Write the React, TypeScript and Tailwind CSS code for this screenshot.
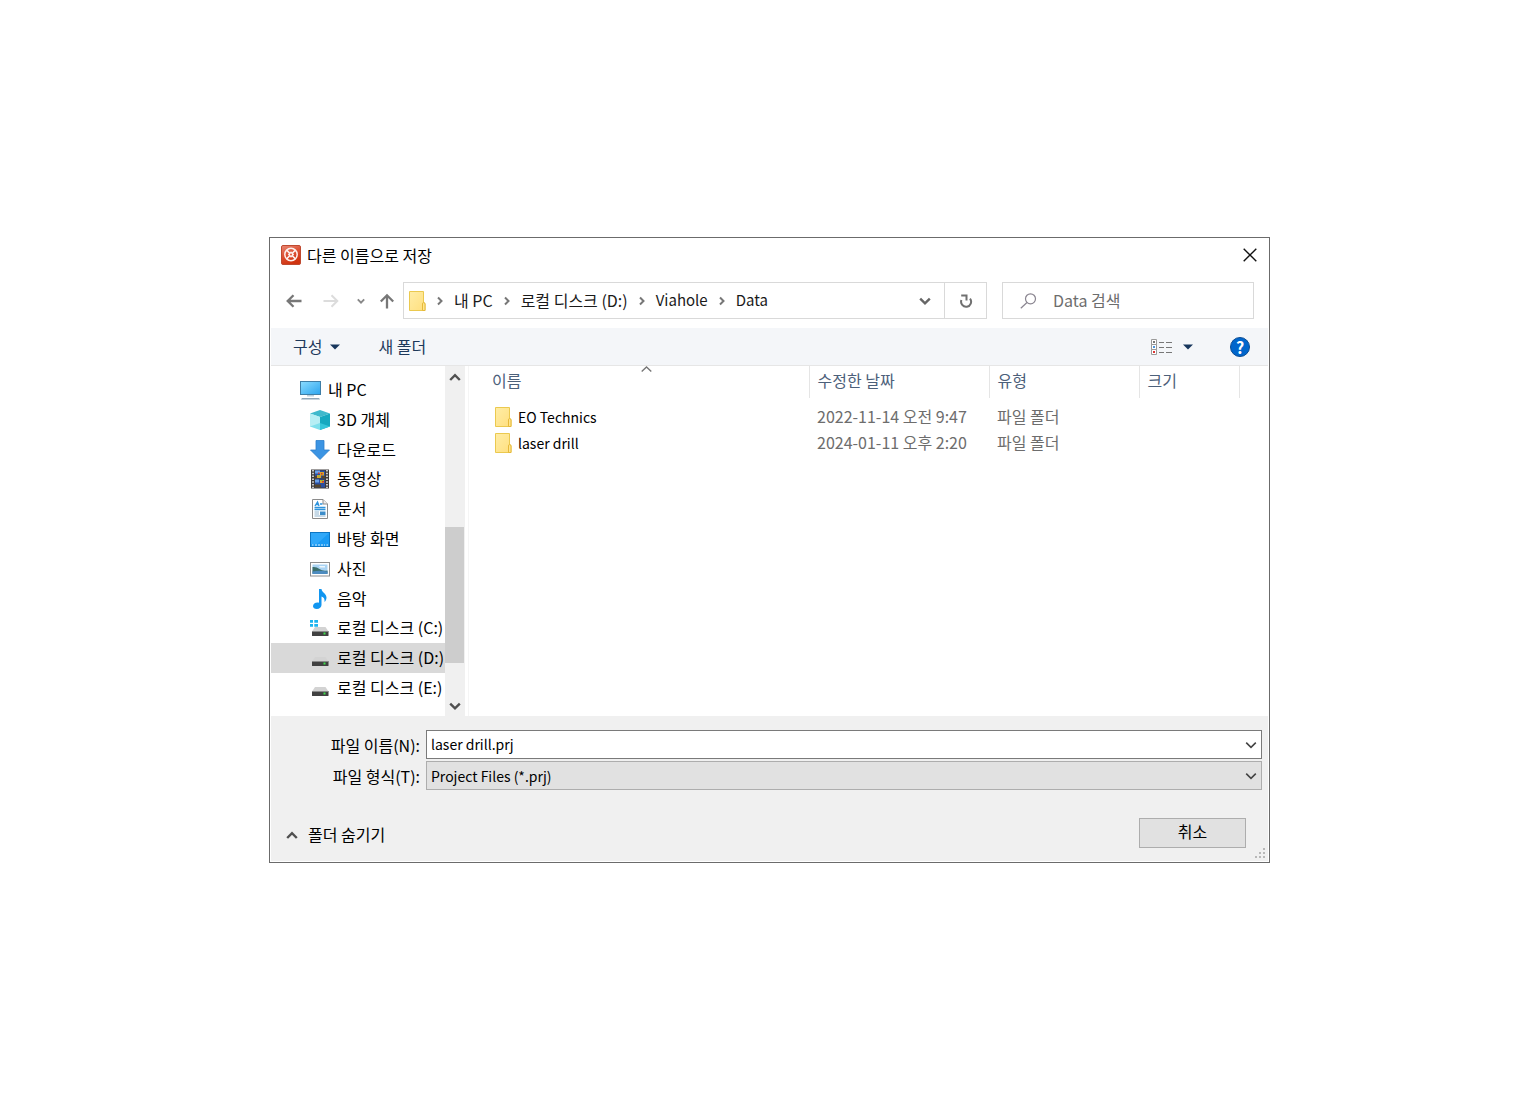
import { useState } from 'react';
import type { ReactNode } from 'react';

function AppIcon() {
  return (
    <svg width="20" height="20" viewBox="0 0 20 20" aria-hidden="true">
      <defs>
        <linearGradient id="app" x1="0" y1="0" x2="0.4" y2="1">
          <stop offset="0" stopColor="#e98a76" />
          <stop offset="0.5" stopColor="#dd5236" />
          <stop offset="1" stopColor="#d0330f" />
        </linearGradient>
      </defs>
      <rect x="0.5" y="0.5" width="19" height="19" rx="1.5" fill="url(#app)" stroke="#bf4a30" />
      <circle cx="10" cy="9.500" r="6.200" fill="none" stroke="#fdf1ee" strokeWidth="1.500" />
      <path d="m5.600 5.100 8.800 8.800M14.400 5.100l-8.800 8.800" stroke="#fdf1ee" strokeWidth="1.500" />
      <path d="m10 6.300 3.200 3.200-3.200 3.200-3.200-3.200Z" fill="#fdf1ee" />
      <circle cx="10" cy="9.500" r="1" fill="#dd5236" />
    </svg>
  );
}

function Chevron({ dir, size = 10, width = 2, color = '#666' }: { dir: 'up' | 'down' | 'right'; size?: number; width?: number; color?: string }) {
  const d = { up: 'M1 7.5 5 3.5 9 7.5', down: 'M1 3 5 7 9 3', right: 'M3 1.5 6.5 5 3 8.5' }[dir];
  return (
    <svg width={size} height={size} viewBox="0 0 10 10" fill="none" stroke={color} strokeWidth={width} className="shrink-0" aria-hidden="true">
      <path d={d} />
    </svg>
  );
}

function Arrow({ dir, color }: { dir: 'left' | 'right' | 'up'; color: string }) {
  const d = { left: 'M15.5 8H1.8M7.5 2.200 1.700 8l5.800 5.800', right: 'M.5 8h13.700M8.500 2.200 14.300 8l-5.800 5.800', up: 'M8 15.500V2.500M1.800 8.500 8 2.300l6.200 6.200' }[dir];
  return (
    <svg width="16" height="16" viewBox="0 0 16 16" fill="none" stroke={color} strokeWidth={dir === 'right' ? 2 : 2.3} aria-hidden="true">
      <path d={d} />
    </svg>
  );
}

function Triangle() {
  return (
    <svg width="10" height="6" viewBox="0 0 10 6" className="shrink-0" aria-hidden="true">
      <path d="M0 .5h10L5 5.5Z" fill="#17365d" />
    </svg>
  );
}

function FolderIcon() {
  return (
    <svg width="17" height="20" viewBox="0 0 17 20" className="shrink-0" aria-hidden="true">
      <defs>
        <linearGradient id="fold" x1="0" y1="0" x2="1" y2="1">
          <stop offset="0" stopColor="#ffeda6" />
          <stop offset="1" stopColor="#ffdf7e" />
        </linearGradient>
      </defs>
      <path d="M.5.5h14v11l1.500 1v7H.5Z" fill="url(#fold)" stroke="#ebc94f" />
      <path d="M13.500 19.500v-6.500q0-1.500 1.200-1.500t1.300 1.500v6.500Z" fill="#ffe68f" stroke="#e6b93a" />
    </svg>
  );
}

function PcIcon() {
  return (
    <svg width="21" height="20" viewBox="0 0 21 20" aria-hidden="true">
      <defs>
        <linearGradient id="pc" x1="0" y1="0" x2="1" y2="1">
          <stop offset="0" stopColor="#8bdcff" />
          <stop offset="1" stopColor="#2ba4ee" />
        </linearGradient>
      </defs>
      <rect x=".5" y="1.500" width="20" height="13" fill="url(#pc)" stroke="#3f7ea6" />
      <path d="M7 15h7v1.500H7Z" fill="#b9cfdd" />
      <path d="M2 18h17l1 1.500H1Z" fill="#8fa6b8" />
    </svg>
  );
}

function CubeIcon() {
  return (
    <svg width="20" height="20" viewBox="0 0 20 20" aria-hidden="true">
      <path d="M10 0 20 3.500 10 7 0 3.500Z" fill="#3fb9cc" />
      <path d="M0 3.500 10 7v13L0 16.500Z" fill="#7fe0ec" />
      <path d="M20 3.500 10 7v13l10-3.500Z" fill="#16a9c0" />
      <path d="M0 3.500 10 7v6L0 16.500Z" fill="#c8f3f7" opacity=".75" />
      <path d="m10 13 10 3.500L10 20Z" fill="#35c6da" />
    </svg>
  );
}

function DownloadIcon() {
  return (
    <svg width="20" height="20" viewBox="0 0 20 20" aria-hidden="true">
      <path d="M6 .5h8V10h5.500L10 19.500.5 10H6Z" fill="#3b94e3" stroke="#2b7fcc" strokeWidth=".8" />
    </svg>
  );
}

function VideoIcon() {
  return (
    <svg width="20" height="20" viewBox="0 0 20 20" aria-hidden="true">
      <path d="M1 .5h18v19H1Z" fill="#3f3b3a" />
      <path d="M3 1v18M17 1v18" stroke="#ececec" strokeWidth="1.600" strokeDasharray="1.500 1.300" />
      <path d="M5 1.500h10v8H5ZM5 10.500h10v8H5Z" fill="#2b4fa0" />
      <path d="M5 1.500h5v3H5ZM5 10.500h4v3H5Z" fill="#6ba0e8" />
      <path d="M10 3h4v3.500h-4ZM7 6h4v3H7ZM10 11h4v3h-4Z" fill="#d9a42c" />
      <path d="M5 7h2v2.500H5ZM5 15.500h6v3H5ZM12 7h3v2.500h-3Z" fill="#57462c" />
      <path d="M11 4h1.500v1.500H11ZM12 12h2v1.500h-2ZM8 3.500h1.500V5H8Z" fill="#d0392d" />
      <path d="M8 6.500h2v1H8ZM11 11h2v1h-2Z" fill="#7fc24a" />
    </svg>
  );
}

function DocIcon() {
  return (
    <svg width="20" height="20" viewBox="0 0 20 20" aria-hidden="true">
      <path d="M2.500.5h10.500l4.500 4.500v14.500h-15Z" fill="#fff" stroke="#8b8b8b" />
      <path d="M13 .5V5h4.500" fill="#eee" stroke="#8b8b8b" />
      <path d="m5 7 2.500-4L9 7M6 5.500h3M10 5h2.500M4.500 8.500h11M4.500 10.500h11" fill="none" stroke="#2e93dc" strokeWidth="1.400" />
      <path d="M4.500 13h4.500M4.500 15h4.500M4.500 17h11" stroke="#8fb4cf" />
      <path d="M10 12.500h5.500v3.500H10Z" fill="#3d8dca" />
    </svg>
  );
}

function DesktopIcon() {
  return (
    <svg width="20" height="20" viewBox="0 0 20 20" aria-hidden="true">
      <rect x=".5" y="3.500" width="19" height="14" fill="#1a9bf4" stroke="#0d76c4" />
      <path d="M1 4h18L7 15H1Z" fill="#40b1fb" opacity=".6" />
      <path d="M2 16h1.500M5 16h10M16.500 16H18" stroke="#d9efff" strokeDasharray="2 1" />
    </svg>
  );
}

function PictureIcon() {
  return (
    <svg width="20" height="20" viewBox="0 0 20 20" aria-hidden="true">
      <rect x=".5" y="3.500" width="19" height="13.500" fill="#fff" stroke="#8e8e8e" />
      <path d="M2.500 5.500h15v9.500h-15Z" fill="#a9d3f3" />
      <path d="M2.500 8q4-.5 7 2t8 1.500v3h-15Z" fill="#3c6f6b" />
      <path d="M2.500 12.500q7-1.500 15 0V15h-15Z" fill="#4d8cc0" />
      <path d="M9 7h6v1.500h-5Z" fill="#eef7fd" />
    </svg>
  );
}

function MusicIcon() {
  return (
    <svg width="20" height="20" viewBox="0 0 20 20" aria-hidden="true">
      <path d="M9 0h2.500c.3 3.500 5 4.500 5 8.500 0 2-1 3.500-2 4.500.5-3-.8-5-3-5.500V16c0 2.200-2 4-4.700 4C4.500 20 3 18.800 3 17.200c0-2 2-3.700 4.500-3.700.6 0 1 .1 1.500.3Z" fill="#1296f0" />
    </svg>
  );
}

function DriveIcon({ system = false }: { system?: boolean }) {
  return (
    <svg width="20" height="20" viewBox="0 0 20 20" aria-hidden="true">
      <path d="M5 9h10.500l3 4.500H2Z" fill="#d3d3d3" />
      <rect x="2" y="13" width="16.500" height="5" rx=".6" fill="#414141" />
      <path d="M2 13.500h16.500" stroke="#8a8a8a" />
      <path d="M13.500 14.500h2v2h-2Z" fill="#3fe04c" />
      {system && <path d="M0 2h3v2.800H0ZM4.300 2H8v2.800H4.300ZM0 6h3v2.800H0ZM4.300 6H8v2.800H4.300Z" fill="#1cb4ef" />}
    </svg>
  );
}

function ViewIcon() {
  return (
    <svg width="21" height="16" viewBox="0 0 21 16" aria-hidden="true">
      <path d="M.5.5h5v5h-5ZM.5 5.500h5v5h-5ZM.5 10.500h5v5h-5Z" fill="#fff" stroke="#9a9a9a" />
      <path d="M2 2h2v2H2Z" fill="#777" />
      <path d="M2 7h2v2H2Z" fill="#4a93dd" />
      <path d="M2 12h2v2H2Z" fill="#d33" />
      <path d="M8 3.500h5M15 3.500h6M8 8.500h5M15 8.500h6M8 13.500h5M15 13.500h6" stroke="#777" />
    </svg>
  );
}

const places: { label: string; icon: ReactNode; root?: boolean }[] = [
  { label: '내 PC', icon: <PcIcon />, root: true },
  { label: '3D 개체', icon: <CubeIcon /> },
  { label: '다운로드', icon: <DownloadIcon /> },
  { label: '동영상', icon: <VideoIcon /> },
  { label: '문서', icon: <DocIcon /> },
  { label: '바탕 화면', icon: <DesktopIcon /> },
  { label: '사진', icon: <PictureIcon /> },
  { label: '음악', icon: <MusicIcon /> },
  { label: '로컬 디스크 (C:)', icon: <DriveIcon system /> },
  { label: '로컬 디스크 (D:)', icon: <DriveIcon /> },
  { label: '로컬 디스크 (E:)', icon: <DriveIcon /> },
];

const files = [
  { name: 'EO Technics', date: '2022-11-14 오전 9:47', type: '파일 폴더' },
  { name: 'laser drill', date: '2024-01-11 오후 2:20', type: '파일 폴더' },
];

const crumbs = [
  { label: '내 PC' },
  { label: '로컬 디스크 (D:)' },
  { label: 'Viahole', latin: true },
  { label: 'Data', latin: true },
];

export default function App() {
  const [selected, setSelected] = useState('로컬 디스크 (D:)');
  const [fileName, setFileName] = useState('laser drill.prj');

  return (
    <main className="flex min-h-screen items-center justify-center bg-white pl-[10px] font-['Noto_Sans_CJK_KR',sans-serif] text-base leading-6 text-black">
      <section role="dialog" aria-labelledby="title" className="w-full max-w-[1001px] border border-[#6b6b6b] bg-white p-px">
        <header className="flex h-[34px] items-center pr-[11px] pb-0.5 pl-[10px]">
          <AppIcon />
          <h1 id="title" className="ml-1.5 flex-1">다른 이름으로 저장</h1>
          <button type="button" aria-label="닫기">
            <svg width="14" height="14" viewBox="0 0 14 14" stroke="#111" strokeWidth="1.400" aria-hidden="true">
              <path d="m.7.7 12.600 12.600M13.300.7.7 13.300" />
            </svg>
          </button>
        </header>

        <nav className="flex h-[55px] items-center pr-[14px] pl-[15px]">
          <button type="button" aria-label="뒤로"><Arrow dir="left" color="#777" /></button>
          <button type="button" aria-label="앞으로" className="ml-[21px]"><Arrow dir="right" color="#dcdcdc" /></button>
          <button type="button" aria-label="최근 위치" className="ml-[18px]"><Chevron dir="down" size={8} width={2.4} color="#888" /></button>
          <button type="button" aria-label="위로" className="mr-2 ml-[14px]"><Arrow dir="up" color="#777" /></button>
          <div className="flex h-[37px] flex-1 items-center border border-[#d9d9d9] pl-[5px]">
            <FolderIcon />
            <ol className="flex flex-1 items-center pb-0.5">
              {crumbs.map((crumb) => (
                <li key={crumb.label} className="flex items-center">
                  <span className="flex w-7 justify-center pt-0.5"><Chevron dir="right" color="#777" /></span>
                  <button type="button" className={`whitespace-nowrap text-[#1a1a1a] ${crumb.latin ? 'text-[15px]' : ''}`}>{crumb.label}</button>
                </li>
              ))}
            </ol>
            <button type="button" aria-label="이전 위치" className="mr-[13px]"><Chevron dir="down" size={12} /></button>
            <button type="button" aria-label="새로 고침" className="flex h-full w-[42px] items-center justify-center border-l border-[#d9d9d9]">
              <svg width="14" height="14" viewBox="0 0 14 14" fill="none" stroke="#707070" strokeWidth="2" aria-hidden="true">
                <path d="M11 4.600A5 5 0 1 1 2.400 6" />
                <path d="M2.200 1.500h5.300v5" />
              </svg>
            </button>
          </div>
          <label className="ml-[15px] flex h-[37px] w-[252px] items-center border border-[#d9d9d9] pl-[17px]">
            <svg width="17" height="16" viewBox="0 0 17 16" fill="none" stroke="#8a8590" strokeWidth="1.200" aria-hidden="true">
              <circle cx="10.500" cy="5.800" r="5" />
              <path d="M7 9.500.8 15.300" />
            </svg>
            <input type="search" aria-label="Data 검색" placeholder="Data 검색" className="ml-4 w-0 flex-1 pb-0.5 outline-none placeholder:text-[#6d6d6d]" />
          </label>
        </nav>

        <div className="flex h-[38px] items-center border-b border-[#e6e6e6] bg-[#f4f6f9] pr-[18px] pl-[22px] text-[#1e395b]">
          <button type="button" className="flex items-center gap-2"><span className="pb-0.5">구성</span><Triangle /></button>
          <button type="button" className="ml-[38px] flex-none pb-0.5">새 폴더</button>
          <button type="button" aria-label="보기" className="ml-auto flex items-center gap-[11px]"><ViewIcon /><Triangle /></button>
          <button type="button" aria-label="도움말" className="ml-[37px] flex size-5 items-center justify-center rounded-full border border-[#0a4c94] bg-[#0066cc] text-base leading-none font-bold text-white">?</button>
        </div>

        <div className="flex min-h-[350px]">
          <aside className="flex w-[194px] shrink-0">
            <ul className="flex w-[174px] flex-col overflow-hidden pt-[9px] pb-[13px]">
              {places.map((p) => (
                <li key={p.label} className="flex flex-1">
                  <button
                    type="button"
                    onClick={() => setSelected(p.label)}
                    className={`flex w-full items-center gap-[7px] whitespace-nowrap ${p.root ? 'pl-[29px]' : 'pl-[39px]'} ${selected === p.label ? 'bg-[#d9d9d9]' : ''}`}
                  >
                    <span className="shrink-0">{p.icon}</span>
                    <span className="pb-0.5">{p.label}</span>
                  </button>
                </li>
              ))}
            </ul>
            <div className="flex w-5 flex-col items-center bg-[#f0f0f0] pt-[5px] pb-1">
              <Chevron dir="up" size={12} color="#505050" />
              <div className="mt-36 mr-px h-[136px] w-[19px] bg-[#cdcdcd]" />
              <div className="mt-auto"><Chevron dir="down" size={12} color="#505050" /></div>
            </div>
          </aside>

          <div className="ml-[3px] flex-1 border-l border-[#f5f5f5]">
            <table className="w-full table-fixed text-left">
              <colgroup>
                <col className="w-[340px]" />
                <col className="w-[180px]" />
                <col className="w-[150px]" />
                <col className="w-[100px]" />
                <col />
              </colgroup>
              <thead>
                <tr className="h-8 text-[#4c607a]">
                  <th scope="col" className="relative border-r border-[#e5e5e5] p-0 pb-1 pl-[23px] font-normal">
                    이름
                    <span className="absolute top-0 left-[172px]">
                      <svg width="11" height="6" viewBox="0 0 11 6" fill="none" stroke="#777" strokeWidth="1.400" aria-hidden="true"><path d="m.7 5.500 4.800-4.500 4.800 4.500" /></svg>
                    </span>
                  </th>
                  <th scope="col" className="border-r border-[#e5e5e5] p-0 pb-1 pl-2 font-normal">수정한 날짜</th>
                  <th scope="col" className="border-r border-[#e5e5e5] p-0 pb-1 pl-2 font-normal">유형</th>
                  <th scope="col" className="border-r border-[#e5e5e5] p-0 pb-1 pl-2 font-normal">크기</th>
                  <td />
                </tr>
              </thead>
              <tbody className="before:block before:h-[6px]">
                {files.map((f) => (
                  <tr key={f.name} className="h-[26px] text-[#6d6d6d]">
                    <td className="p-0 pl-[26px] text-black">
                      <span className="flex items-center gap-[6px] text-sm"><FolderIcon />{f.name}</span>
                    </td>
                    <td className="p-0 pb-0.5 pl-2 whitespace-nowrap">{f.date}</td>
                    <td className="p-0 pb-0.5 pl-2">{f.type}</td>
                    <td />
                    <td />
                  </tr>
                ))}
              </tbody>
            </table>
          </div>
        </div>

        <footer className="relative bg-[#f0f0f0] pt-[14px] pb-[13px]">
          <div className="grid grid-cols-[149px_1fr] items-center gap-x-[6px] gap-y-0.5 pr-[6px]">
            <label htmlFor="name" className="text-right">파일 이름(N):</label>
            <div className="flex h-[29px] items-center border border-[#7a7a7a] bg-white pr-1 pl-1">
              <input id="name" value={fileName} onChange={(e) => setFileName(e.target.value)} className="w-0 flex-1 pb-0.5 text-sm outline-none" />
              <button type="button" aria-label="이전 파일 이름"><Chevron dir="down" size={12} width={1.3} color="#444" /></button>
            </div>
            <label htmlFor="type" className="text-right">파일 형식(T):</label>
            <div className="relative flex h-[29px] items-center border border-[#adadad] bg-[#e1e1e1]">
              <select id="type" className="h-full w-full appearance-none bg-transparent pl-1 text-sm outline-none">
                <option>Project Files (*.prj)</option>
              </select>
              <span className="pointer-events-none absolute right-1"><Chevron dir="down" size={12} width={1.3} color="#444" /></span>
            </div>
          </div>
          <div className="flex items-center justify-between pt-7 pr-[22px] pl-[15px]">
            <button type="button" className="flex items-center gap-[10px] pt-1"><Chevron dir="up" size={12} color="#505050" /><span className="pb-0.5">폴더 숨기기</span></button>
            <button type="button" className="h-[30px] w-[107px] border border-[#adadad] bg-[#e1e1e1] pb-1">취소</button>
          </div>
          <svg width="11" height="11" viewBox="0 0 11 11" fill="#b8b8b8" className="absolute right-0.5 bottom-0.5" aria-hidden="true">
            <path d="M8 0h2v2H8ZM4 4h2v2H4ZM8 4h2v2H8ZM0 8h2v2H0ZM4 8h2v2H4ZM8 8h2v2H8Z" />
          </svg>
        </footer>
      </section>
    </main>
  );
}
